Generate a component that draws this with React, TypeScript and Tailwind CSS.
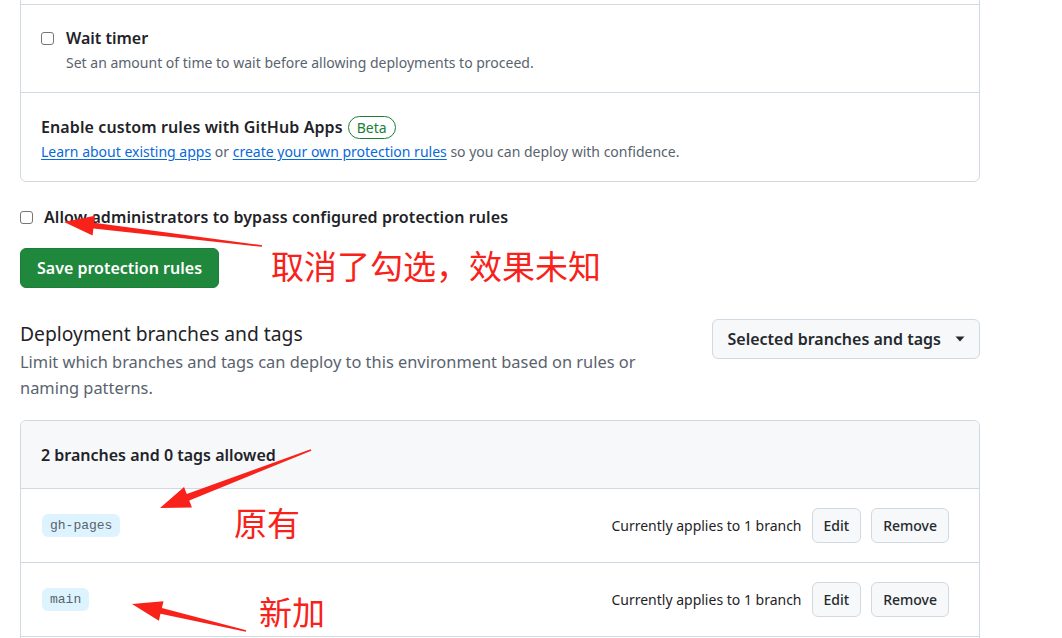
import React from "react";

const sans = { fontFamily: '"Segoe UI", "Noto Sans", "Liberation Sans", sans-serif' };

function Arrow({ tail, tip, head = 30, wing = 10, shaft = 3 }: { tail: [number, number]; tip: [number, number]; head?: number; wing?: number; shaft?: number }) {
  const dx = tip[0] - tail[0];
  const dy = tip[1] - tail[1];
  const len = Math.hypot(dx, dy);
  const ux = dx / len;
  const uy = dy / len;
  const nx = -uy;
  const ny = ux;
  const bx = tip[0] - ux * head;
  const by = tip[1] - uy * head;
  const pts = [
    [tail[0] + nx * 0.8, tail[1] + ny * 0.8],
    [bx + nx * shaft, by + ny * shaft],
    [bx + nx * wing, by + ny * wing],
    tip,
    [bx - nx * wing, by - ny * wing],
    [bx - nx * shaft, by - ny * shaft],
    [tail[0] - nx * 0.8, tail[1] - ny * 0.8],
  ];
  return <polygon points={pts.map((p) => `${p[0]},${p[1]}`).join(" ")} fill="#f8221b" />;
}

function Checkbox() {
  return <span className="inline-block w-[13px] h-[13px] rounded-[3px] border border-[#767676] bg-white shrink-0" />;
}

function Btn({ children }: { children: React.ReactNode }) {
  return (
    <span className="inline-flex items-center h-[35px] px-[11px] rounded-md border border-[#d1d9e0] bg-[#f6f8fa] text-[14px] font-medium text-[#25292e]">
      {children}
    </span>
  );
}

function BranchRow({ name }: { name: string }) {
  return (
    <div className="flex items-center justify-between pl-[21px] pr-[30px] h-[74px] border-t border-[#d1d9e0]">
      <span
        className="inline-flex items-center h-[23px] px-[8px] rounded-md bg-[#ddf4ff] text-[13px] text-[#59636e]"
        style={{ fontFamily: '"Liberation Mono", "DejaVu Sans Mono", monospace' }}
      >
        {name}
      </span>
      <div className="flex items-center gap-[10px]">
        <span className="text-[14px] text-[#1f2328]">Currently applies to 1 branch</span>
        <Btn>Edit</Btn>
        <Btn>Remove</Btn>
      </div>
    </div>
  );
}

const cjk = { fontFamily: '"Noto Sans CJK SC", sans-serif' };

export default function App() {
  return (
    <div className="relative w-[1062px] h-[638px] overflow-hidden bg-white text-[#1f2328]" style={sans}>
      <div className="w-[960px] ml-[20px]">
        {/* top box */}
        <div className="-mt-[10px] border border-[#d1d9e0] rounded-md">
          <div className="h-[14px] border-b border-[#d1d9e0]" />
          <div className="pl-[20px] pt-[21px] pb-[19px] border-b border-[#d1d9e0]">
            <div className="flex items-center gap-[12px] h-[24px]">
              <Checkbox />
              <span className="text-[16px] font-semibold leading-[24px]">Wait timer</span>
            </div>
            <div className="pl-[25px] mt-[3px] text-[14px] leading-[20px] text-[#59636e]">
              Set an amount of time to wait before allowing deployments to proceed.
            </div>
          </div>
          <div className="pl-[20px] pt-[22px] pb-[19px]">
            <div className="flex items-center gap-[5px] h-[24px]">
              <span className="text-[16px] font-semibold leading-[24px] tracking-[0.1px]">Enable custom rules with GitHub Apps</span>
              <span className="inline-flex items-center h-[23px] px-[8px] rounded-full border border-[#1a7f37] text-[#1a7f37] text-[14px]">
                Beta
              </span>
            </div>
            <div className="mt-[3px] text-[14px] leading-[20px] text-[#59636e]">
              <span className="text-[#0969da] underline underline-offset-2">Learn about existing apps</span> or{" "}
              <span className="text-[#0969da] underline underline-offset-2">create your own protection rules</span> so you can deploy
              with confidence.
            </div>
          </div>
        </div>

        <div className="mt-[23px] flex items-center gap-[11px] h-[24px]">
          <Checkbox />
          <span className="text-[16px] font-semibold leading-[24px] tracking-[0.1px]">
            Allow administrators to bypass configured protection rules
          </span>
        </div>

        <div className="mt-[19px]">
          <span className="inline-flex items-center h-[40px] px-[16px] rounded-md bg-[#1f883d] border border-[#1a7f37] text-white text-[16px] font-semibold">
            Save protection rules
          </span>
        </div>

        <div className="mt-[31px] flex justify-between items-start">
          <div className="w-[640px]">
            <div className="text-[19.3px] leading-[30px]">Deployment branches and tags</div>
            <div className="text-[16.4px] leading-[26px] text-[#59636e]">
              Limit which branches and tags can deploy to this environment based on rules or naming patterns.
            </div>
          </div>
          <span className="inline-flex items-center h-[40px] pl-[15px] pr-[14px] gap-[14px] rounded-md border border-[#d1d9e0] bg-[#f6f8fa] text-[16px] font-semibold text-[#25292e]">
            Selected branches and tags
            <svg width="10" height="6" viewBox="0 0 10 6">
              <path d="M0.5 0.5h9L5 5.5z" fill="#25292e" />
            </svg>
          </span>
        </div>

        <div className="mt-[19px] border border-[#d1d9e0] rounded-t-md">
          <div className="bg-[#f6f8fa] rounded-t-md pl-[20px] pt-[22px] pb-[21px] text-[16px] leading-[24px] font-semibold">
            2 branches and 0 tags allowed
          </div>
          <BranchRow name="gh-pages" />
          <BranchRow name="main" />
          <div className="border-t border-[#d1d9e0] h-[20px]" />
        </div>
      </div>

      {/* annotations */}
      <svg className="absolute inset-0 pointer-events-none" width="1062" height="638">
        <Arrow tail={[262, 246]} tip={[64, 222]} />
        <Arrow tail={[311, 450]} tip={[160, 508]} wing={11} shaft={3.5} />
        <Arrow tail={[246, 631]} tip={[132, 604]} />
      </svg>
      <div className="absolute left-[271px] top-[242px] text-[33px] leading-[46px] text-[#f8221b] whitespace-nowrap" style={cjk}>
        取消了勾选，效果未知
      </div>
      <div className="absolute left-[234px] top-[499px] text-[33px] leading-[46px] text-[#f8221b]" style={cjk}>
        原有
      </div>
      <div className="absolute left-[259px] top-[588px] text-[33px] leading-[46px] text-[#f8221b]" style={cjk}>
        新加
      </div>
    </div>
  );
}
